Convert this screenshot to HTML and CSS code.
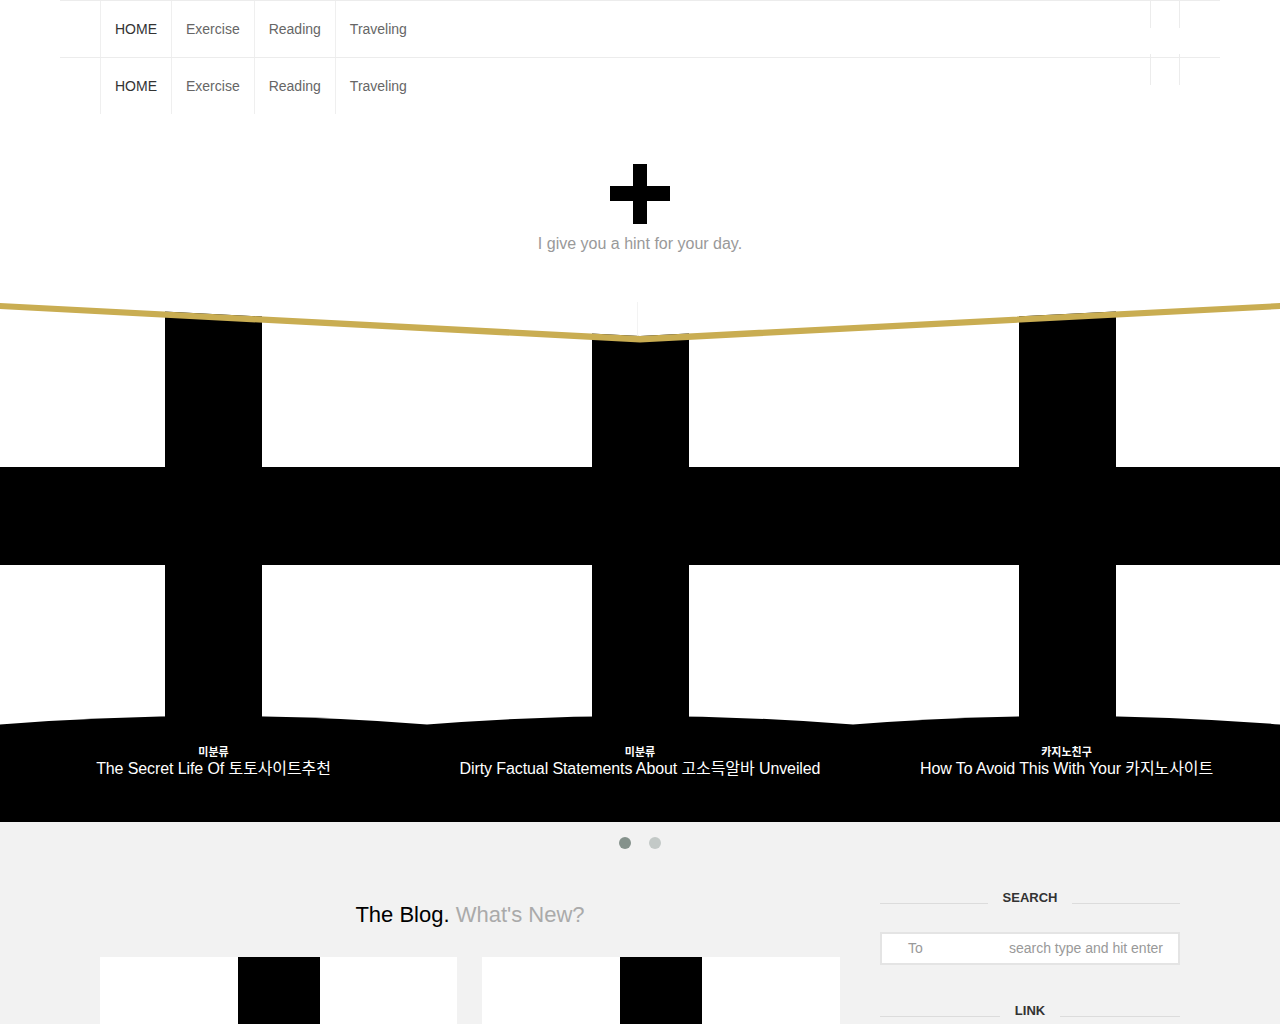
FILE: index.html
```html
<!DOCTYPE html>
<html lang="ko">
<head>
<meta charset="utf-8">
<title>I give you a hint for your day.</title>
<link rel="stylesheet" href="styles.css">
</head>
<body>
<header class="site-header">
  <div class="nav-row">
    <ul class="menu">
      <li class="menu-item current">HOME</li>
      <li class="menu-item">Exercise</li>
      <li class="menu-item">Reading</li>
      <li class="menu-item">Traveling</li>
    </ul>
    <div class="social"></div>
  </div>
  <div class="nav-row">
    <ul class="menu">
      <li class="menu-item current">HOME</li>
      <li class="menu-item">Exercise</li>
      <li class="menu-item">Reading</li>
      <li class="menu-item">Traveling</li>
    </ul>
    <div class="social"></div>
  </div>
</header>

<div class="branding">
  <svg class="logo" width="60" height="60" viewBox="0 0 60 60" shape-rendering="crispEdges"><rect x="23" y="0" width="14" height="60" fill="#000"/><rect x="0" y="22" width="60" height="15" fill="#000"/></svg>
  <p class="tagline">I give you a hint for your day.</p>
</div>

<section class="slider">
  <div class="slides">
    <div class="slide">
      <svg class="slide-img" viewBox="0 0 427 427" shape-rendering="crispEdges"><rect width="427" height="427" fill="#fff"/><rect x="165" y="0" width="97" height="427" fill="#000"/><rect x="0" y="165" width="427" height="98" fill="#000"/></svg>
      <div class="caption">
        <svg class="caption-curve" viewBox="0 0 100 10" preserveAspectRatio="none"><path d="M0,8.5 Q50,-8.5 100,8.5 L100,10 L0,10 Z" fill="#000"/></svg>
        <div class="caption-body">
          <span class="cat">미분류</span>
          <span class="title">The Secret Life Of 토토사이트추천</span>
        </div>
      </div>
    </div>
    <div class="slide">
      <svg class="slide-img" viewBox="0 0 426 427" shape-rendering="crispEdges"><rect width="426" height="427" fill="#fff"/><rect x="165" y="0" width="97" height="427" fill="#000"/><rect x="0" y="165" width="426" height="98" fill="#000"/></svg>
      <div class="caption">
        <svg class="caption-curve" viewBox="0 0 100 10" preserveAspectRatio="none"><path d="M0,8.5 Q50,-8.5 100,8.5 L100,10 L0,10 Z" fill="#000"/></svg>
        <div class="caption-body">
          <span class="cat">미분류</span>
          <span class="title">Dirty Factual Statements About 고소득알바 Unveiled</span>
        </div>
      </div>
    </div>
    <div class="slide">
      <svg class="slide-img" viewBox="0 0 427 427" shape-rendering="crispEdges"><rect width="427" height="427" fill="#fff"/><rect x="166" y="0" width="97" height="427" fill="#000"/><rect x="0" y="165" width="427" height="98" fill="#000"/></svg>
      <div class="caption">
        <svg class="caption-curve" viewBox="0 0 100 10" preserveAspectRatio="none"><path d="M0,8.5 Q50,-8.5 100,8.5 L100,10 L0,10 Z" fill="#000"/></svg>
        <div class="caption-body">
          <span class="cat">카지노친구</span>
          <span class="title">How To Avoid This With Your 카지노사이트</span>
        </div>
      </div>
    </div>
  </div>
  <svg class="slider-top" viewBox="0 0 1280 42" preserveAspectRatio="none">
    <polygon points="0,0 1280,0 1280,1 640,34 0,1" fill="#fff"/>
    <line x1="637.5" y1="0" x2="637.5" y2="34" stroke="#f3f3f3" stroke-width="1"/>
    <polygon points="0,1 640,34 1280,1 1280,7 640,40.5 0,7" fill="#c9ad52"/>
  </svg>
</section>

<div class="dots"><span class="dot active"></span><span class="dot"></span></div>

<main class="content">
  <div class="blog">
    <h2 class="blog-title">The Blog. <span class="sub">What's New?</span></h2>
    <div class="posts">
      <article class="card">
        <svg class="card-img" viewBox="0 0 357 357" shape-rendering="crispEdges"><rect width="357" height="357" fill="#fff"/><rect x="138" y="0" width="82" height="357" fill="#000"/><rect x="0" y="138" width="357" height="82" fill="#000"/></svg>
      </article>
      <article class="card">
        <svg class="card-img" viewBox="0 0 358 358" shape-rendering="crispEdges"><rect width="358" height="358" fill="#fff"/><rect x="138" y="0" width="82" height="358" fill="#000"/><rect x="0" y="138" width="358" height="82" fill="#000"/></svg>
      </article>
    </div>
  </div>
  <aside class="sidebar">
    <div class="widget-title"><span class="rule"></span><span class="label">SEARCH</span><span class="rule"></span></div>
    <div class="search-box"><span>To</span><span>search type and hit enter</span></div>
    <div class="widget-title link-title"><span class="rule"></span><span class="label">LINK</span><span class="rule"></span></div>
  </aside>
</main>
</body>
</html>
```

FILE: styles.css
```css
* { box-sizing: border-box; }
html, body { margin: 0; padding: 0; }
body {
  background: #f2f2f2;
  font-family: "Liberation Sans", Arial, "Noto Sans CJK KR", sans-serif;
  color: #333;
}

.site-header {
  background: #fff;
}
.nav-row {
  width: 1160px;
  margin: 0 auto;
  padding: 0 40px;
  height: 57px;
  border-top: 1px solid #ececec;
  display: flex;
  justify-content: space-between;
  align-items: stretch;
}
.menu {
  list-style: none;
  margin: 0;
  padding: 0;
  display: flex;
}
.menu-item {
  padding: 0 14px;
  border-left: 1px solid #efefef;
  font-size: 14px;
  line-height: 56px;
  color: #666;
}
.menu-item.current { color: #333; }
.social {
  align-self: flex-start;
  width: 30px;
  height: 31px;
  margin-top: -4px;
  border-left: 1px solid #ececec;
  border-right: 1px solid #ececec;
}

.branding {
  background: #fff;
  padding: 50px 0 49px;
  display: flex;
  flex-direction: column;
  align-items: center;
}
.logo { display: block; }
.tagline {
  margin: 11px 0 0;
  font-size: 16px;
  line-height: 18px;
  color: #999;
}

.slider {
  position: relative;
  height: 520px;
  background: #000;
  overflow: hidden;
}
.slides {
  display: grid;
  grid-template-columns: 427px 426px 427px;
  height: 100%;
}
.slide {
  position: relative;
  height: 100%;
}
.slide-img {
  display: block;
  width: 100%;
  height: 427px;
}
.caption {
  position: absolute;
  left: 0;
  right: 0;
  bottom: 0;
  height: 106px;
  display: flex;
  flex-direction: column;
}
.caption-curve {
  display: block;
  width: 100%;
  height: 10px;
}
.caption-body {
  flex: 1;
  background: #000;
  color: #fff;
  display: flex;
  flex-direction: column;
  align-items: center;
  padding-top: 19px;
}
.cat {
  font-size: 11px;
  font-weight: bold;
  line-height: 14px;
}
.title {
  font-size: 16px;
  line-height: 20px;
  letter-spacing: -0.1px;
}
.slider-top {
  position: absolute;
  top: 0;
  left: 0;
  width: 100%;
  height: 42px;
}

.dots {
  display: flex;
  justify-content: center;
  gap: 18px;
  padding: 15px 0 0;
}
.dot {
  width: 12px;
  height: 12px;
  border-radius: 50%;
  background: #c3c9c7;
}
.dot.active { background: #85928c; }

.content {
  width: 1080px;
  margin: 0 auto;
  padding-top: 41px;
  display: flex;
  gap: 40px;
}
.blog { width: 740px; }
.blog-title {
  margin: 12px 0 29px;
  text-align: center;
  font-size: 22px;
  line-height: 26px;
  font-weight: normal;
  color: #000;
}
.blog-title .sub { color: #aaa; }
.posts {
  display: grid;
  grid-template-columns: 357px 358px;
  gap: 25px;
}
.card { background: #fff; }
.card-img {
  display: block;
  width: 100%;
  aspect-ratio: 1 / 1;
  height: auto;
}

.sidebar { width: 300px; }
.widget-title {
  display: flex;
  align-items: center;
}
.widget-title .rule {
  flex: 1;
  height: 1px;
  background: #dcdcdc;
  margin-top: 10px;
}
.widget-title .label {
  padding: 0 15px;
  font-size: 13px;
  font-weight: bold;
  line-height: 16px;
  color: #333;
}
.search-box {
  margin-top: 26px;
  height: 33px;
  background: #fff;
  border: 2px solid #e4e4e4;
  display: flex;
  justify-content: space-between;
  align-items: center;
  padding: 0 15px 1px 26px;
  font-size: 14px;
  color: #999;
}
.link-title { margin-top: 38px; }
```
